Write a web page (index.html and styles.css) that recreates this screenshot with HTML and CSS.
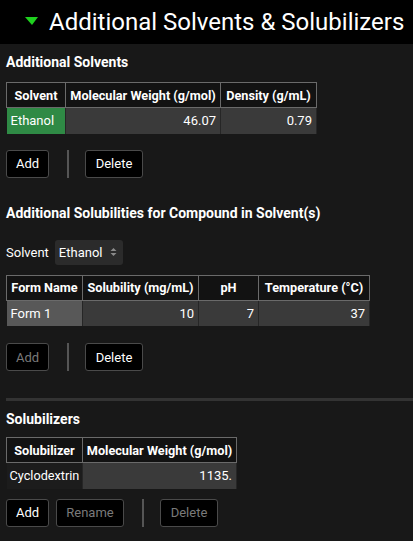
FILE: index.html
```html
<!DOCTYPE html>
<html>
<head>
<meta charset="utf-8">
<link rel="stylesheet" href="styles.css">
</head>
<body>
<div class="header">
  <span class="tri"></span>
  <span class="title">Additional Solvents &amp; Solubilizers</span>
</div>
<div class="content">
  <div class="section">
    <div class="heading">Additional Solvents</div>
    <table class="grid t1">
      <tr><th class="c1">Solvent</th><th class="c2">Molecular Weight (g/mol)</th><th class="c3">Density (g/mL)</th></tr>
      <tr><td class="sel">Ethanol</td><td class="num">46.07</td><td class="num">0.79</td></tr>
    </table>
    <div class="buttons">
      <button class="btn w-add">Add</button>
      <span class="vsep"></span>
      <button class="btn w-del">Delete</button>
    </div>
  </div>
  <div class="section s2">
    <div class="heading">Additional Solubilities for Compound in Solvent(s)</div>
    <div class="solvent-row">
      <span class="label">Solvent</span>
      <span class="select">Ethanol<svg class="arrows" width="7" height="10" viewBox="0 0 7 10"><path d="M0.5 4 L3.5 1 L6.5 4 Z M0.5 6 L3.5 9 L6.5 6 Z" fill="#8a8a8a"/></svg></span>
    </div>
    <table class="grid t2">
      <tr><th class="d1">Form Name</th><th class="d2">Solubility (mg/mL)</th><th class="d3">pH</th><th class="d4">Temperature (°C)</th></tr>
      <tr><td class="grey">Form 1</td><td class="num">10</td><td class="num">7</td><td class="num">37</td></tr>
    </table>
    <div class="buttons">
      <button class="btn disabled w-add">Add</button>
      <span class="vsep"></span>
      <button class="btn w-del">Delete</button>
    </div>
  </div>
  <div class="hsep"></div>
  <div class="section s3">
    <div class="heading">Solubilizers</div>
    <table class="grid t3">
      <tr><th class="e1">Solubilizer</th><th class="e2">Molecular Weight (g/mol)</th></tr>
      <tr><td class="plain">Cyclodextrin</td><td class="num">1135.</td></tr>
    </table>
    <div class="buttons">
      <button class="btn w-add">Add</button>
      <button class="btn disabled rename">Rename</button>
      <span class="vsep"></span>
      <button class="btn disabled w-del">Delete</button>
    </div>
  </div>
</div>
</body>
</html>
```
FILE: styles.css
```css
html, body {
  margin: 0;
  padding: 0;
  background: #181818;
  color: #ffffff;
  font-family: Roboto, "Liberation Sans", sans-serif;
}
.header {
  height: 44px;
  background: #000000;
  display: flex;
  align-items: center;
  padding-left: 25px;
}
.tri {
  width: 0;
  height: 0;
  border-left: 7px solid transparent;
  border-right: 6px solid transparent;
  border-top: 8px solid #1fd11f;
  margin-right: 11px;
  margin-top: -2px;
}
.title {
  font-size: 24px;
  color: #ffffff;
  white-space: nowrap;
}
.content {
  padding: 0 0 0 6px;
}
.heading {
  font-weight: bold;
  font-size: 14px;
  line-height: 16px;
  padding-top: 10px;
}
.grid {
  border-collapse: collapse;
  table-layout: fixed;
  margin-top: 12px;
  font-size: 13px;
}
.grid th, .grid td {
  box-sizing: border-box;
}
.grid th {
  background: #121212;
  border: 1px solid #6a6a6a;
  height: 25px;
  padding: 0 2px;
  font-size: 12.7px;
  font-weight: bold;
  white-space: nowrap;
  overflow: hidden;
  text-align: center;
}
.grid td {
  height: 26px;
  padding: 0 4px;
  background: #3a3a3a;
  border-right: 1px solid #262626;
  white-space: nowrap;
  overflow: hidden;
  text-align: left;
}
.grid td.num { text-align: right; }
.grid td.sel { background: #2f8a45; }
.grid td.grey { background: #585858; }
.grid td.plain { background: #1c1c1c; padding-left: 3px; font-size: 12.7px; }
.t1 { width: 310px; }
.c1 { width: 59px; }
.c2 { width: 155px; }
.c3 { width: 96px; }
.t2 { width: 363px; }
.d1 { width: 76px; }
.d2 { width: 116px; }
.d3 { width: 60px; }
.d4 { width: 111px; }
.t3 { width: 230px; }
.e1 { width: 76px; }
.e2 { width: 154px; }
.buttons {
  display: flex;
  align-items: center;
  margin-top: 16px;
}
.btn {
  height: 28px;
  background: #000000;
  color: #ffffff;
  border: 1px solid #4a4a4a;
  border-radius: 3px;
  font-family: Roboto, "Liberation Sans", sans-serif;
  font-size: 13px;
  padding: 0;
  text-align: center;
}
.btn.disabled { color: #7a7a7a; }
.w-add { width: 43px; }
.w-del { width: 58px; }
.rename { width: 68px; margin-left: 7px; }
.vsep {
  width: 2px;
  height: 28px;
  background: #555555;
  margin: 0 16px 0 18px;
}
.s2 .heading { padding-top: 27px; }
.solvent-row {
  display: flex;
  align-items: center;
  margin-top: 19px;
  font-size: 13px;
}
.label { margin-right: 6px; }
.select {
  display: flex;
  align-items: center;
  background: #2b2b2b;
  border-radius: 3px;
  height: 25px;
  width: 68px;
  box-sizing: border-box;
  padding: 0 0 0 4px;
  font-size: 13px;
}
.arrows { margin-left: 8px; }
.t2 { margin-top: 10px; }
.s2 .buttons { margin-top: 17px; }
.hsep {
  height: 3px;
  background: #333333;
  margin-top: 27px;
}
.s3 .heading { padding-top: 10px; }
.t3 { margin-top: 10px; }
.s3 .buttons { margin-top: 10px; }
```
